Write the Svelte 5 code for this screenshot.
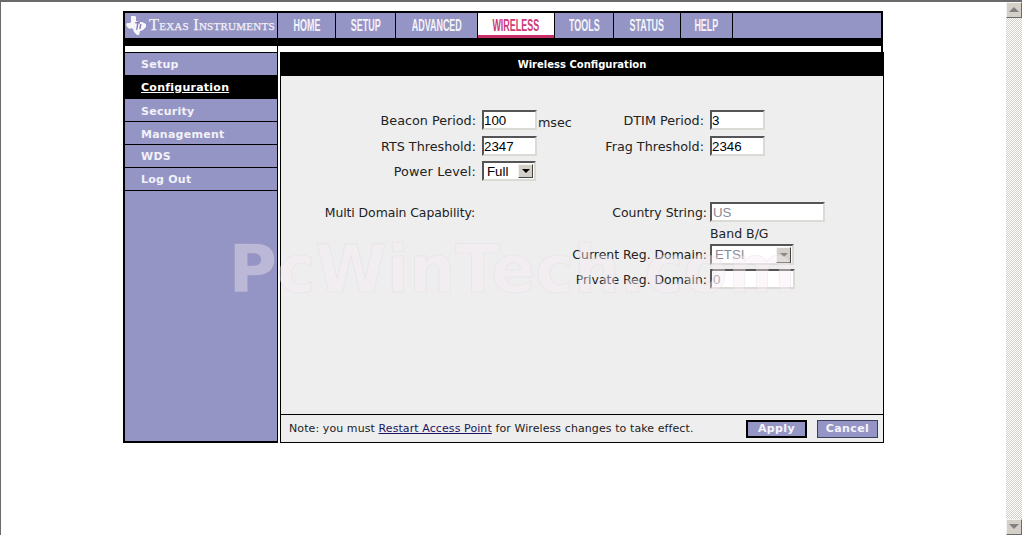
<script>
  const tabs = [
    { label: 'HOME', width: 57 },
    { label: 'SETUP', width: 59 },
    { label: 'ADVANCED', width: 81 },
    { label: 'WIRELESS', width: 76, active: true },
    { label: 'TOOLS', width: 58 },
    { label: 'STATUS', width: 66 },
    { label: 'HELP', width: 51 }
  ];
  const menu = [
    { label: 'Setup' },
    { label: 'Configuration', active: true },
    { label: 'Security', line: true, low: true },
    { label: 'Management', line: true, low: true },
    { label: 'WDS', line: true, thick: true },
    { label: 'Log Out', line: true }
  ];
</script>

<div class="window">
  <div class="page">
    <div class="frame">
      <header>
        <nav>
          <div class="brand">
            <svg viewBox="0 0 20 19" width="20" height="19">
              <path d="M5 0h4l1 1v4l3 1 3 0 4 2v3l-3 3-3 1-1 4h-2l-3-3-1-3-2-1-1 1-2-1-2-3 1-2 3 0 1-1z" fill="#f6f6fb" />
              <path d="M9 6h5v1.500h-1.500l-1 5.500q-.2 1-1.500 1l1-6.500h-1.500z M14 8h1.500l-.8 5h-1.500z" fill="#8a7fb5" />
            </svg>
            <span class="brand-name">Texas Instruments</span>
          </div>
          {#each tabs as tab}
            <a class="tab" class:active={tab.active} style:width="{tab.width}px" href="#top"><span>{tab.label}</span></a>
          {/each}
          <div class="tab-fill"></div>
        </nav>
        <div class="band"></div>
        <div class="spacer"><div class="spacer-left"></div><div class="spacer-right"></div></div>
      </header>

      <div class="body">
        <aside>
          {#each menu as item}
            <a class="item" class:active={item.active} class:line={item.line} class:low={item.low} class:thick={item.thick} href="#top">{item.label}</a>
          {/each}
        </aside>

        <main>
          <h1>Wireless Configuration</h1>
          <div class="content">
            <div class="grid-top">
              <label for="beacon">Beacon Period:</label>
              <div class="cell"><input id="beacon" class="short" value="100" /><span class="unit">msec</span></div>
              <label for="dtim">DTIM Period:</label>
              <input id="dtim" class="short" value="3" />

              <label for="rts">RTS Threshold:</label>
              <div class="cell"><input id="rts" class="short" value="2347" /></div>
              <label for="frag">Frag Threshold:</label>
              <input id="frag" class="short" value="2346" />

              <span class="label power-label">Power Level:</span>
              <div class="cell">
                <span class="select power"><span class="value">Full</span><span class="arrow"></span></span>
              </div>
            </div>

            <div class="grid-domain">
              <span class="label multi">Multi Domain Capability:</span>
              <label for="country">Country String:</label>
              <input id="country" class="wide" value="US" disabled />

              <span class="band-name">Band B/G</span>

              <span class="label second">Current Reg. Domain:</span>
              <span class="select domain disabled"><span class="value">ETSI</span><span class="arrow"></span></span>

              <label class="second" for="private">Private Reg. Domain:</label>
              <input id="private" class="private" value="0" disabled />
            </div>
          </div>
          <footer>
            <p>Note: you must <a href="#top">Restart Access Point</a> for Wireless changes to take effect.</p>
            <div class="buttons">
              <button class="apply">Apply</button>
              <button>Cancel</button>
            </div>
          </footer>
        </main>
      </div>
    </div>
    <div class="watermark">PcWinTech.com</div>
  </div>

  <div class="scrollbar">
    <div class="sb-btn"><i class="up"></i></div>
    <div class="sb-track"></div>
    <div class="sb-btn"><i class="down"></i></div>
  </div>
</div>

<style>
  :global(body) {
    margin: 0;
    background: #fff;
  }

  .window {
    display: flex;
    height: 535px;
    box-sizing: border-box;
    border-top: 2px solid #6a6a6a;
    border-left: 1px solid #6a6a6a;
    overflow: hidden;
    font-family: "DejaVu Sans", sans-serif;
  }

  .page {
    position: relative;
    flex: 1;
    padding: 9px 0 0 122px;
  }

  .frame {
    width: 761px;
  }

  /* top navigation */
  header {
    width: 760px;
  }

  nav {
    display: flex;
    height: 25px;
    background: #000;
    border: 2px solid #000;
    border-bottom: 0;
    gap: 1px;
    box-sizing: content-box;
  }

  .brand {
    display: flex;
    align-items: center;
    width: 152px;
    padding-left: 1px;
    box-sizing: border-box;
    background: #9595c5;
  }

  .brand svg {
    flex: none;
  }

  .brand-name {
    margin-left: 3px;
    font-family: "Liberation Serif", serif;
    font-variant: small-caps;
    font-size: 16.3px;
    letter-spacing: 0.25px;
    line-height: 1;
    color: #f2f2f8;
    white-space: nowrap;
    -webkit-text-stroke: 0.25px #f2f2f8;
  }

  .tab {
    display: flex;
    justify-content: center;
    align-items: center;
    flex: none;
    box-sizing: border-box;
    padding-top: 1px;
    background: #9595c5;
    color: #f4f4fa;
    text-decoration: none;
    font-family: "Liberation Sans", sans-serif;
    font-size: 16px;
    font-weight: bold;
  }

  .tab span {
    display: inline-block;
    transform: scaleX(0.56);
  }

  .tab.active {
    background: #fff;
    color: #cf3a72;
    border-bottom: 3px solid #c92f69;
    padding-top: 4px;
  }

  .tab-fill {
    flex: 1;
    background: #9595c5;
  }

  .band {
    height: 8px;
    background: #000;
  }

  .spacer {
    display: flex;
    height: 6px;
    background: #000;
    padding: 0 2px;
    gap: 1px;
  }

  .spacer-left {
    width: 152px;
    background: #fff;
  }

  .spacer-right {
    flex: 1;
    background: #fff;
  }

  /* body */
  .body {
    display: flex;
    gap: 2px;
    height: 391px;
  }

  aside {
    display: flex;
    flex-direction: column;
    width: 155px;
    box-sizing: border-box;
    background: #9595c5;
    border: solid #000;
    border-width: 1px 1px 2px 2px;
  }

  .item {
    display: block;
    height: 22px;
    padding-left: 16px;
    font-size: 11px;
    font-weight: bold;
    line-height: 23px;
    color: #f1f1f8;
    text-decoration: none;
    background: #9595c5;
    letter-spacing: 0.25px;
  }

  .item.low {
    line-height: 25px;
  }

  .item.line {
    border-bottom: 1px solid #000;
  }

  .item.thick {
    margin-right: -1px;
    border-right: 1px solid #000;
    border-top: 1px solid #000;
    margin-top: -1px;
  }

  .item.active {
    height: 24px;
    line-height: 25px;
    background: #000;
    color: #fff;
    text-decoration: underline;
  }

  main {
    display: flex;
    flex-direction: column;
    width: 604px;
    box-sizing: border-box;
    background: #eee;
    border: 1px solid #000;
    border-top: 0;
  }

  h1 {
    margin: 0 -1px;
    height: 24px;
    background: #000;
    color: #fff;
    font-size: 10px;
    line-height: 25px;
    font-weight: bold;
    text-align: center;
  }

  .content {
    flex: 1;
    padding-top: 34px;
    color: #222;
  }

  .grid-top {
    display: grid;
    grid-template-columns: 195px 90px 126px 55px;
    grid-template-rows: 26px 25px 20px;
    column-gap: 6px;
    font-size: 12.75px;
  }

  .grid-domain {
    display: grid;
    grid-template-columns: 194px 235px auto;
    grid-template-rows: 21px 21px 25px 20px;
    margin-top: 21px;
    font-size: 12.45px;
  }

  label,
  .label {
    text-align: right;
    line-height: 21px;
    white-space: nowrap;
  }

  .power-label {
    letter-spacing: 0.15px;
  }

  .multi {
    letter-spacing: -0.08px;
  }

  .grid-domain label,
  .grid-domain .label {
    padding-right: 3px;
  }

  .grid-domain > .label:first-child {
    padding-right: 0;
  }

  .second {
    grid-column: 2;
  }

  .band-name {
    grid-column: 3;
    line-height: 22px;
    font-size: 12.5px;
  }

  .cell {
    display: flex;
    align-items: flex-start;
  }

  .unit {
    margin-left: 1px;
    line-height: 25px;
    letter-spacing: -0.05px;
  }

  input {
    box-sizing: border-box;
    height: 20px;
    padding: 0;
    margin: 0;
    background: #fff;
    border: 2px solid;
    border-color: #555 #dcdad4 #dcdad4 #555;
    font-family: "Liberation Sans", sans-serif;
    font-size: 13.3px;
    color: #000;
    outline: none;
  }

  input:disabled {
    color: #8a8a96;
    background: #fff;
  }

  .short {
    width: 55px;
  }

  .wide {
    width: 115px;
    padding-left: 1px;
  }

  .private {
    width: 85px;
    padding-left: 1px;
  }

  .select {
    display: flex;
    box-sizing: border-box;
    height: 20px;
    padding-right: 1px;
    background: #fff;
    border: 2px solid;
    border-color: #555 #dcdad4 #dcdad4 #555;
    font-family: "Liberation Sans", sans-serif;
    font-size: 13.3px;
    color: #000;
  }

  .select .value {
    flex: 1;
    padding-left: 3px;
    line-height: 17px;
  }

  .select .arrow {
    position: relative;
    width: 15px;
    height: 14px;
    margin-top: 1px;
    box-sizing: border-box;
    background: #d4d0c8;
    border: 1px solid;
    border-color: #f4f4f4 #444 #444 #f4f4f4;
  }

  .select .arrow::after {
    content: '';
    position: absolute;
    left: 3px;
    top: 4px;
    border: 4px solid transparent;
    border-top-color: #000;
    border-bottom: 0;
  }

  .power {
    width: 54px;
  }

  .domain {
    width: 84px;
    height: 21px;
  }

  .disabled .value {
    color: #8a8a96;
  }

  .disabled .arrow {
    height: 16px;
  }

  .disabled .arrow::after {
    border-top-color: #8a8a8a;
    top: 5px;
  }

  footer {
    display: flex;
    justify-content: space-between;
    align-items: center;
    height: 27px;
    padding: 0 5px 0 8px;
    border-top: 1px solid #000;
  }

  footer p {
    margin: 0;
    font-size: 11px;
    color: #222;
    letter-spacing: 0.09px;
  }

  footer a {
    color: #1c1464;
  }

  .buttons {
    display: flex;
    gap: 10px;
  }

  button {
    box-sizing: border-box;
    width: 61px;
    height: 18px;
    padding: 0;
    background: #9595c5;
    border: 1px solid #3d3d5c;
    color: #f4f4fa;
    font-family: "DejaVu Sans", sans-serif;
    font-size: 11px;
    font-weight: bold;
    letter-spacing: 0.4px;
  }

  .apply {
    border: 2px solid #000;
  }

  /* lies over the whole page */
  .watermark {
    position: absolute;
    left: 228px;
    top: 235px;
    font-size: 65px;
    line-height: 1;
    font-weight: bold;
    color: rgba(245, 235, 242, 0.4);
    -webkit-text-stroke: 0.6px rgba(215, 210, 215, 0.35);
    pointer-events: none;
    white-space: nowrap;
  }

  .scrollbar {
    display: flex;
    flex-direction: column;
    flex: none;
    width: 16px;
  }

  .sb-btn {
    position: relative;
    flex: none;
    height: 16px;
    box-sizing: border-box;
    background: #d4d0c8;
    border: 1px solid;
    border-color: #f4f4f4 #6a6a6a #6a6a6a #f4f4f4;
  }

  .sb-btn i {
    position: absolute;
    left: 2px;
    top: 4px;
    border: 5px solid transparent;
  }

  .sb-btn .up {
    border-bottom-color: #808080;
    border-top: 0;
  }

  .sb-btn .down {
    border-top-color: #808080;
    border-bottom: 0;
  }

  .sb-track {
    flex: 1;
    background-color: #fff;
    background-image: conic-gradient(#d4d0c8 25%, #fff 0 50%, #d4d0c8 0 75%, #fff 0);
    background-size: 2px 2px;
  }
</style>
